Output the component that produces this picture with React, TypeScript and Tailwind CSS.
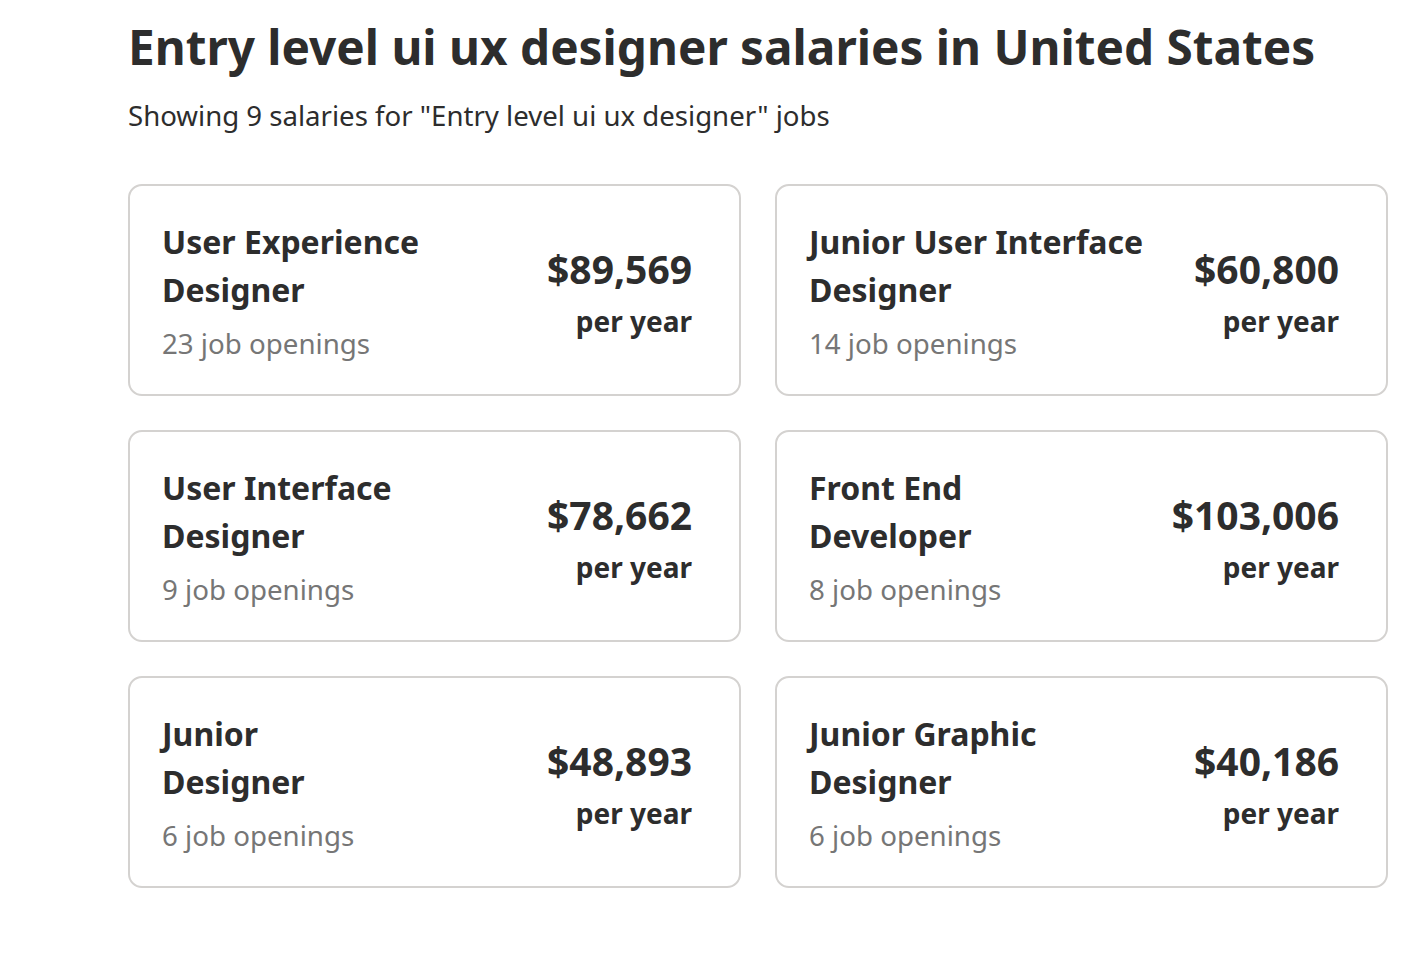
import React from "react";

interface SalaryCard {
  title: string[];
  openings: string;
  salary: string;
}

const cards: SalaryCard[] = [
  { title: ["User Experience", "Designer"], openings: "23 job openings", salary: "$89,569" },
  { title: ["Junior User Interface", "Designer"], openings: "14 job openings", salary: "$60,800" },
  { title: ["User Interface", "Designer"], openings: "9 job openings", salary: "$78,662" },
  { title: ["Front End", "Developer"], openings: "8 job openings", salary: "$103,006" },
  { title: ["Junior", "Designer"], openings: "6 job openings", salary: "$48,893" },
  { title: ["Junior Graphic", "Designer"], openings: "6 job openings", salary: "$40,186" },
];

export default function App() {
  return (
    <div
      className="min-h-screen bg-white text-[#2d2d2d]"
      style={{ fontFamily: '"Noto Sans", "Open Sans", sans-serif' }}
    >
      <div className="pl-[128px] pt-[17px] w-[1388px]">
        <h1 className="text-[47.7px] leading-[60px] font-bold">
          Entry level ui ux designer salaries in United States
        </h1>
        <p className="mt-[20px] text-[27.6px] leading-[36px]">
          Showing 9 salaries for "Entry level ui ux designer" jobs
        </p>

        <div className="mt-[51px] grid grid-cols-2 gap-[34px]">
          {cards.map((card) => (
            <div
              key={card.salary}
              className="flex justify-between h-[212px] rounded-[14px] border-2 border-[#d4d2d0] pl-[32px] pr-[47px] pt-[32px]"
            >
              <div>
                <div className="text-[32px] leading-[48px] font-bold">
                  {card.title.map((line) => (
                    <div key={line}>{line}</div>
                  ))}
                </div>
                <div className="mt-[11px] text-[27.7px] leading-[36px] text-[#767676]">
                  {card.openings}
                </div>
              </div>
              <div className="mt-[29px] text-right font-bold">
                <div className="text-[39px] leading-[44px]">{card.salary}</div>
                <div className="mt-[10px] text-[28px] leading-[40px]">per year</div>
              </div>
            </div>
          ))}
        </div>
      </div>
    </div>
  );
}
